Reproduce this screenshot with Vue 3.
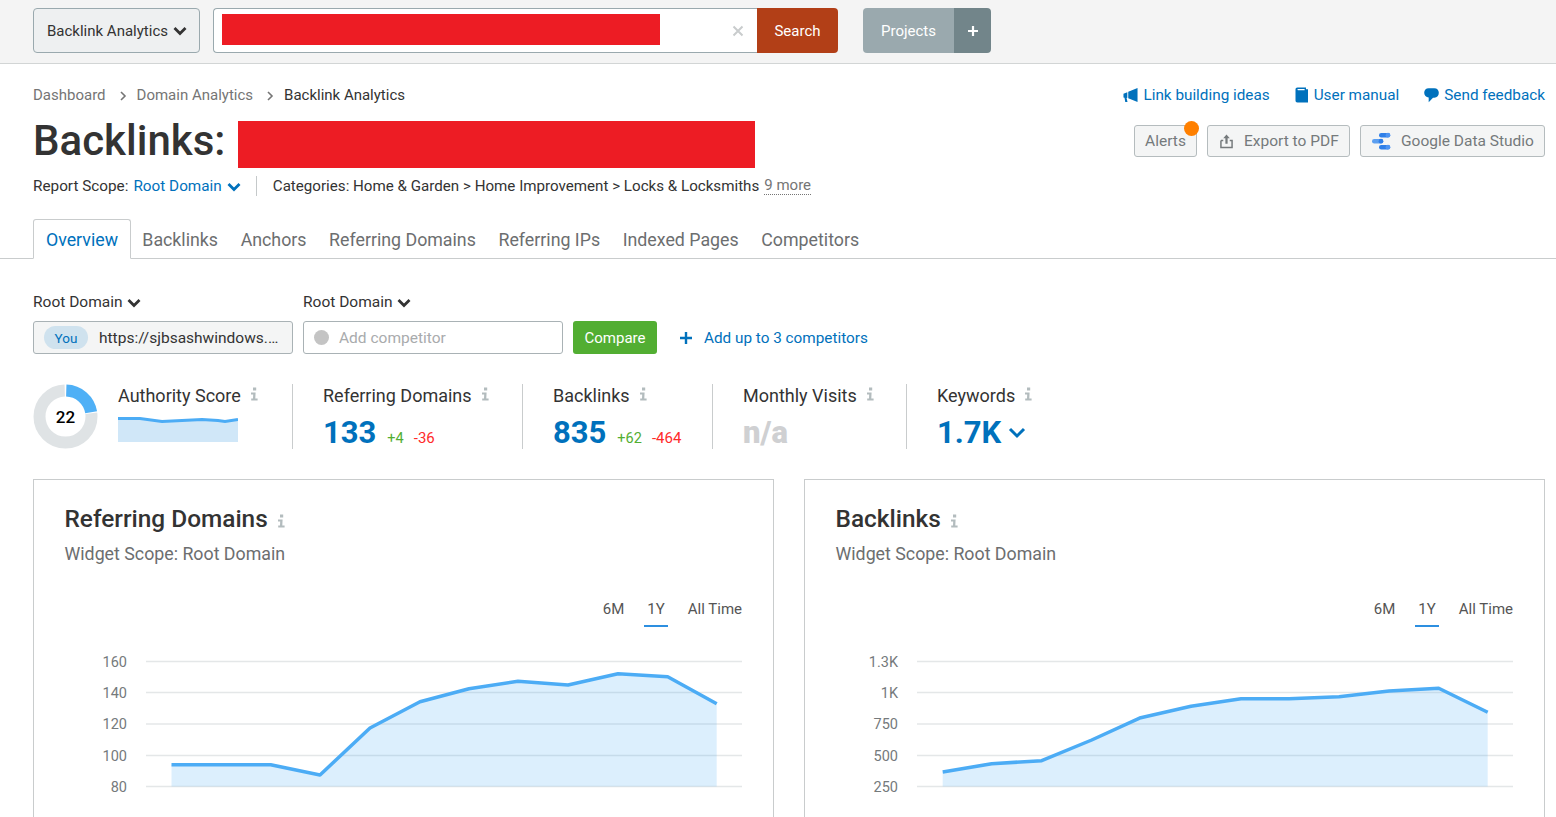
<script setup>
const tabs = ['Overview', 'Backlinks', 'Anchors', 'Referring Domains', 'Referring IPs', 'Indexed Pages', 'Competitors']
const gridY = [21.5, 52.5, 84, 115.5, 146.5]

function makeChart(title, offset, labels, pts) {
  const local = pts.map(([x, y]) => [x - offset, y - 640])
  const line = local.map(p => p.join(',')).join(' ')
  const area = `${local[0][0]},146.5 ${line} ${local[local.length - 1][0]},146.5`
  return { title, labels, line, area }
}

const charts = [
  makeChart('Referring Domains', 34, ['160', '140', '120', '100', '80'], [
    [171.5, 764.7], [221, 764.7], [270.7, 764.7], [320, 775], [370, 728], [420, 701.7],
    [469, 688.7], [518, 681.3], [568, 685], [618, 673.7], [667.7, 676.7], [716.7, 703.7]
  ]),
  makeChart('Backlinks', 805, ['1.3K', '1K', '750', '500', '250'], [
    [942.7, 772], [991.7, 763.7], [1041.7, 760.7], [1091.7, 740], [1140.7, 717.7], [1191, 706.3],
    [1241, 698.7], [1289, 698.7], [1339, 696.7], [1389, 691], [1438.7, 688.3], [1487.7, 712.3]
  ])
]
</script>

<template>
  <div class="page">
    <header class="topbar">
      <button class="tool-select">
        <span>Backlink Analytics</span>
        <svg class="chev" viewBox="0 0 14 10"><path d="M1.5 2 L7 7.5 L12.5 2" /></svg>
      </button>
      <div class="search">
        <div class="search-box">
          <div class="redact-search"></div>
          <svg class="clear" viewBox="0 0 12 12"><path d="M1.5 1.5 L10.5 10.5 M10.5 1.5 L1.5 10.5" /></svg>
        </div>
        <button class="search-btn">Search</button>
      </div>
      <div class="projects">
        <span class="projects-label">Projects</span>
        <span class="projects-plus">
          <svg viewBox="0 0 12 12"><path d="M6 1 V11 M1 6 H11" /></svg>
        </span>
      </div>
    </header>

    <section class="head">
      <div class="crumbs-row">
        <nav class="crumbs">
          <span class="crumb">Dashboard</span>
          <svg class="crumb-sep" viewBox="0 0 8 10"><path d="M2 1 L6 5 L2 9" /></svg>
          <span class="crumb">Domain Analytics</span>
          <svg class="crumb-sep" viewBox="0 0 8 10"><path d="M2 1 L6 5 L2 9" /></svg>
          <span class="crumb current">Backlink Analytics</span>
        </nav>
        <div class="links">
          <a class="link">
            <svg class="link-icon" viewBox="0 0 16 16"><path d="M5.6 4.6 L15.5 0.5 V15.5 L5.6 11.4 Z M0.5 6.6 L4.6 5 V11 L3.8 11.2 L4.8 15.5 H2.4 L1.6 11 L0.5 10.6 Z" /></svg>
            Link building ideas
          </a>
          <a class="link">
            <svg class="link-icon book" viewBox="0 0 14 16"><path d="M2.5 0.5 H11 V2.2 H13 V15.5 H2.5 C1.2 15.5 0.5 14.7 0.5 13.5 V2.5 C0.5 1.3 1.2 0.5 2.5 0.5 Z M3 2 C2.3 2 2.3 3.2 3 3.2 H9.6 V2 Z" fill-rule="evenodd" /></svg>
            User manual
          </a>
          <a class="link">
            <svg class="link-icon" viewBox="0 0 16 16"><path d="M5 0.8 H11 C14 0.8 15.8 2.8 15.8 5.6 C15.8 8.5 14 10.8 11 10.8 H9.6 L5 15.6 V10.6 C2.2 10.2 0.2 8.4 0.2 5.6 C0.2 2.8 2 0.8 5 0.8 Z" /></svg>
            Send feedback
          </a>
        </div>
      </div>

      <div class="title-row">
        <div class="title-wrap">
          <h1 class="title">Backlinks:</h1>
          <div class="redact-title"></div>
        </div>
        <div class="actions">
          <button class="action alerts">
            Alerts
            <span class="dot"></span>
          </button>
          <button class="action export">
            <svg class="export-icon" viewBox="0 0 14 16"><path class="solid" d="M7 0.5 L10.5 4.5 H8.2 V10.5 H5.8 V4.5 H3.5 Z" /><path class="outline" d="M1 7 V14.5 H13 V7 H10.5 M3.5 7 H1" /></svg>
            Export to PDF
          </button>
          <button class="action gds">
            <svg class="gds-icon" viewBox="0 0 20 18">
              <rect x="8" y="1" width="11" height="4.5" rx="2.25" fill="#2f7fe8" />
              <circle cx="17" cy="3.2" r="2.4" fill="#4d94f2" />
              <rect x="1" y="7" width="11" height="4.5" rx="2.25" fill="#5c9ff0" />
              <circle cx="10" cy="9.2" r="2.4" fill="#2f7fe8" />
              <rect x="8" y="13" width="11" height="4.5" rx="2.25" fill="#2f7fe8" />
              <circle cx="17" cy="15.2" r="2.4" fill="#4d94f2" />
            </svg>
            Google Data Studio
          </button>
        </div>
      </div>

      <div class="scope-row">
        <span>Report Scope:</span>
        <span class="scope-link">Root Domain</span>
        <svg class="chev blue" viewBox="0 0 14 10"><path d="M1.5 2 L7 7.5 L12.5 2" /></svg>
        <span class="scope-sep"></span>
        <span class="cats">Categories: Home &amp; Garden &gt; Home Improvement &gt; Locks &amp; Locksmiths</span>
        <span class="more">9 more</span>
      </div>
    </section>

    <nav class="tabs">
      <span v-for="(t, i) in tabs" :key="t" class="tab" :class="{ active: i === 0 }">{{ t }}</span>
    </nav>

    <section class="filters">
      <div class="filter-col">
        <div class="filter-label">
          Root Domain
          <svg class="chev" viewBox="0 0 14 10"><path d="M1.5 2 L7 7.5 L12.5 2" /></svg>
        </div>
        <div class="field you-field">
          <span class="you">You</span>
          <span class="url">https://sjbsashwindows.…</span>
        </div>
      </div>
      <div class="filter-col">
        <div class="filter-label">
          Root Domain
          <svg class="chev" viewBox="0 0 14 10"><path d="M1.5 2 L7 7.5 L12.5 2" /></svg>
        </div>
        <div class="field add-field">
          <span class="grey-dot"></span>
          <span class="placeholder">Add competitor</span>
        </div>
      </div>
      <button class="compare">Compare</button>
      <a class="add-more">
        <svg class="add-plus" viewBox="0 0 14 14"><path d="M7 1 V13 M1 7 H13" /></svg>
        Add up to 3 competitors
      </a>
    </section>

    <section class="stats">
      <div class="stat authority">
        <svg class="donut" viewBox="0 0 65 65">
          <circle class="ring-grey" cx="32.5" cy="32.5" r="26" pathLength="100" stroke-dasharray="76.6 23.4" stroke-dashoffset="-22.9" />
          <circle class="ring-blue" cx="32.5" cy="32.5" r="26" pathLength="100" stroke-dasharray="21.8 78.2" stroke-dashoffset="-0.5" />
          <text x="32.5" y="38.5" text-anchor="middle" class="donut-text">22</text>
        </svg>
        <div class="authority-body">
          <div class="stat-label">Authority Score <svg class="info" viewBox="0 0 8 14"><path d="M3 0.5 H6.2 V3.4 H3 Z M1 5.4 H5.6 L5.3 11.4 H7.6 V13.5 H1.2 V11.4 H3 L3.2 7.4 H1 Z" /></svg></div>
          <svg class="spark" viewBox="0 0 120 25">
            <polygon class="spark-area" points="0,1.5 22,1.5 44,4.5 64,3.5 84,2.5 100,3.5 107,4.5 120,2.5 120,25 0,25" />
            <polyline class="spark-line" points="0,1.5 22,1.5 44,4.5 64,3.5 84,2.5 100,3.5 107,4.5 120,2.5" />
          </svg>
        </div>
      </div>
      <div class="stat domains">
        <div class="stat-label">Referring Domains <svg class="info" viewBox="0 0 8 14"><path d="M3 0.5 H6.2 V3.4 H3 Z M1 5.4 H5.6 L5.3 11.4 H7.6 V13.5 H1.2 V11.4 H3 L3.2 7.4 H1 Z" /></svg></div>
        <div class="stat-value"><span class="num">133</span><span class="up">+4</span><span class="down">-36</span></div>
      </div>
      <div class="stat links-stat">
        <div class="stat-label">Backlinks <svg class="info" viewBox="0 0 8 14"><path d="M3 0.5 H6.2 V3.4 H3 Z M1 5.4 H5.6 L5.3 11.4 H7.6 V13.5 H1.2 V11.4 H3 L3.2 7.4 H1 Z" /></svg></div>
        <div class="stat-value"><span class="num">835</span><span class="up">+62</span><span class="down">-464</span></div>
      </div>
      <div class="stat visits">
        <div class="stat-label">Monthly Visits <svg class="info" viewBox="0 0 8 14"><path d="M3 0.5 H6.2 V3.4 H3 Z M1 5.4 H5.6 L5.3 11.4 H7.6 V13.5 H1.2 V11.4 H3 L3.2 7.4 H1 Z" /></svg></div>
        <div class="stat-value"><span class="num na">n/a</span></div>
      </div>
      <div class="stat keywords">
        <div class="stat-label">Keywords <svg class="info" viewBox="0 0 8 14"><path d="M3 0.5 H6.2 V3.4 H3 Z M1 5.4 H5.6 L5.3 11.4 H7.6 V13.5 H1.2 V11.4 H3 L3.2 7.4 H1 Z" /></svg></div>
        <div class="stat-value">
          <span class="num">1.7K</span>
          <svg class="kw-chev" viewBox="0 0 18 12"><path d="M2 2 L9 9 L16 2" /></svg>
        </div>
      </div>
    </section>

    <section class="cards">
      <article v-for="c in charts" :key="c.title" class="card">
        <h2 class="card-title">{{ c.title }} <svg class="info" viewBox="0 0 8 14"><path d="M3 0.5 H6.2 V3.4 H3 Z M1 5.4 H5.6 L5.3 11.4 H7.6 V13.5 H1.2 V11.4 H3 L3.2 7.4 H1 Z" /></svg></h2>
        <div class="card-sub">Widget Scope: Root Domain</div>
        <div class="ranges">
          <span class="range">6M</span>
          <span class="range active">1Y</span>
          <span class="range">All Time</span>
        </div>
        <svg class="chart" viewBox="0 0 739 177">
          <line v-for="y in gridY" :key="y" class="grid" x1="112" x2="708" :y1="y" :y2="y" />
          <text v-for="(l, i) in c.labels" :key="l" class="axis" x="93" :y="gridY[i] + 5">{{ l }}</text>
          <polygon class="area" :points="c.area" />
          <polyline class="line" :points="c.line" />
        </svg>
      </article>
    </section>
  </div>
</template>

<style>
html, body { margin: 0; background: #fff; overflow: hidden; }
</style>

<style scoped>
.page {
  width: 1556px;
  height: 817px;
  overflow: hidden;
  background: #fff;
  font-family: Roboto, "Noto Sans", sans-serif;
  font-size: 15px;
  color: #333;
}
button { font-family: inherit; cursor: pointer; }
svg { display: block; flex: none; }

.chev { width: 14px; height: 10px; }
.chev path { fill: none; stroke: #333; stroke-width: 2.8; }
.chev.blue path { stroke: #0071bc; }

.topbar {
  height: 64px;
  box-sizing: border-box;
  border-bottom: 1px solid #d2d5d5;
  background: #f4f4f4;
  padding: 8px 0 0 33px;
  display: flex;
  align-items: flex-start;
}
.tool-select {
  width: 167px;
  height: 45px;
  background: #eef0f1;
  border: 1px solid #9aa9ae;
  border-radius: 4px;
  color: #333;
  font-size: 15px;
  padding: 0 0 0 13px;
  display: flex;
  align-items: center;
  gap: 5px;
}
.search { margin-left: 13px; display: flex; height: 45px; }
.search-box {
  width: 544px;
  box-sizing: border-box;
  background: #fff;
  border: 1px solid #9aa9ae;
  border-right: none;
  border-radius: 4px 0 0 4px;
  padding-left: 8px;
  display: flex;
  align-items: center;
  justify-content: space-between;
}
.redact-search { width: 438px; height: 31px; background: #ed1c24; margin-bottom: 2px; }
.clear { width: 12px; height: 12px; margin-right: 13px; margin-top: 1px; }
.clear path { stroke: #c9cccd; stroke-width: 2; fill: none; }
.search-btn {
  width: 81px;
  border: none;
  background: #b23f17;
  color: #fff;
  font-size: 15px;
  border-radius: 0 4px 4px 0;
  padding: 0;
}
.projects { margin-left: 25px; height: 45px; display: flex; border-radius: 4px; overflow: hidden; color: #fff; }
.projects-label { width: 91px; background: #9aa9ae; display: flex; align-items: center; justify-content: center; }
.projects-plus { width: 37px; background: #72858a; display: flex; align-items: center; justify-content: center; }
.projects-plus svg { width: 12px; height: 12px; }
.projects-plus path { stroke: #fff; stroke-width: 2.2; fill: none; }

.head { padding: 0 11px 0 33px; }
.crumbs-row { height: 20px; margin-top: 21px; display: flex; justify-content: space-between; align-items: center; }
.crumbs { display: flex; align-items: center; }
.crumb { color: #757575; }
.crumb.current { color: #333; }
.crumb-sep { width: 8px; height: 10px; margin: 1px 10px 0 13px; }
.crumb-sep path { fill: none; stroke: #757575; stroke-width: 1.6; }
.links { display: flex; gap: 25px; font-size: 15.3px; }
.link { color: #0071bc; display: flex; align-items: center; gap: 5px; }
.link-icon { width: 15px; height: 16px; fill: #0071bc; }
.link-icon.book { width: 14px; }

.title-row { margin-top: 16px; height: 47px; display: flex; justify-content: space-between; align-items: flex-start; }
.title-wrap { display: flex; height: 47px; }
.title { margin: 0; font-size: 42px; font-weight: 500; color: #333; line-height: 39px; width: 205px; }
.redact-title { width: 517px; height: 47px; background: #ed1c24; }
.actions { display: flex; gap: 10px; margin-top: 4px; }
.action {
  height: 32px;
  background: #f4f5f5;
  border: 1px solid #b5bcbe;
  border-radius: 3px;
  color: #757a7c;
  font-size: 15.5px;
  display: flex;
  align-items: center;
  position: relative;
  padding: 0;
}
.alerts { width: 63px; justify-content: center; padding-right: 0; }
.dot { position: absolute; top: -5px; right: -3px; width: 15px; height: 15px; border-radius: 50%; background: #ff8000; }
.export { width: 143px; padding-left: 12px; gap: 11px; }
.export-icon { width: 13px; height: 15px; }
.export-icon .solid { fill: #757a7c; }
.export-icon .outline { fill: none; stroke: #757a7c; stroke-width: 1.6; }
.gds { width: 185px; padding-left: 10px; gap: 10px; }
.gds-icon { width: 20px; height: 18px; }

.scope-row { margin-top: 8px; height: 20px; display: flex; align-items: center; font-size: 15.3px; }
.scope-link { color: #0071bc; margin-left: 5px; }
.scope-row .chev { margin-left: 5px; margin-top: 2px; }
.scope-sep { width: 1px; height: 20px; background: #c5c9ca; margin: 0 15.5px; }
.cats { font-size: 15.15px; }
.more { margin-left: 5px; color: #757575; border-bottom: 1px dotted #757575; line-height: 17px; font-size: 15px; }

.tabs {
  margin-top: 23px;
  height: 39px;
  padding-left: 33px;
  border-bottom: 1px solid #c9cccd;
  display: flex;
  font-size: 17.8px;
  color: #6c6e6f;
}
.tab { height: 40px; display: flex; align-items: center; padding: 1px 11.3px 0; box-sizing: border-box; }
.tab.active {
  color: #0071bc;
  background: #fff;
  border: 1px solid #c9cccd;
  border-bottom-color: #fff;
  border-radius: 3px 3px 0 0;
  width: 98px;
  justify-content: center;
  padding: 0;
}

.filters { margin-top: 33px; padding-left: 33px; display: flex; align-items: flex-end; gap: 10px; }
.filter-col { width: 260px; }
.filter-label { height: 20px; display: flex; align-items: center; gap: 4px; margin-bottom: 9px; font-size: 15.5px; }
.filter-label .chev { margin-top: 2px; }
.field {
  height: 33px;
  box-sizing: border-box;
  border: 1px solid #a9b2b5;
  border-radius: 3px;
  display: flex;
  align-items: center;
}
.you-field { background: #f4f5f5; padding-left: 10px; }
.you { width: 44px; height: 23px; border-radius: 12px; background: #cfe2ee; color: #0071bc; font-size: 13.5px; display: flex; align-items: center; justify-content: center; }
.url { margin-left: 11px; font-size: 15.5px; }
.add-field { padding-left: 10px; background: #fff; }
.grey-dot { width: 15px; height: 15px; border-radius: 50%; background: #c4c4c4; }
.placeholder { margin-left: 10px; color: #a9abad; font-size: 15.5px; }
.compare { width: 84px; height: 33px; border: none; border-radius: 3px; background: #52ae32; color: #fff; font-size: 15px; padding: 0; }
.add-more { margin-left: 12px; height: 33px; display: flex; align-items: center; color: #0071bc; gap: 11px; font-size: 15.3px; }
.add-plus { width: 14px; height: 14px; }
.add-plus path { stroke: #0071bc; stroke-width: 2.4; fill: none; }

.stats { margin-top: 30px; padding-left: 33px; height: 65px; display: flex; }
.stat { box-sizing: border-box; height: 65px; border-left: 1px solid #c9cccd; padding-left: 30px; }
.authority { width: 259px; border-left: none; padding-left: 0; display: flex; }
.domains { width: 230px; }
.links-stat { width: 190px; }
.visits { width: 194px; }
.keywords { width: 200px; }
.donut { width: 65px; height: 65px; }
.donut circle { fill: none; stroke-width: 12; transform: rotate(-90deg); transform-origin: 32.5px 32.5px; }
.ring-grey { stroke: #dfe3e5; }
.ring-blue { stroke: #4fb0f6; }
.donut-text { font-size: 17px; font-weight: 500; fill: #000; }
.authority-body { margin-left: 20px; width: 120px; }
.stat-label { height: 24px; margin-top: -1px; font-size: 18px; display: flex; align-items: center; gap: 9px; white-space: nowrap; }
.info { width: 8px; height: 14px; fill: #b3bcbe; margin-bottom: 2px; }
.spark { width: 120px; height: 25px; margin-top: 10px; }
.spark-area { fill: #d0e7f8; }
.spark-line { fill: none; stroke: #4cacf5; stroke-width: 3; }
.stat-value { display: flex; align-items: baseline; margin-top: 8px; height: 36px; line-height: 36px; }
.num { font-size: 31px; font-weight: 700; color: #0071bc; }
.num.na { color: #cfd0d2; font-weight: 900; }
.up { color: #52ae32; font-size: 14.5px; margin-left: 11px; }
.down { color: #ff2a2a; font-size: 15px; margin-left: 10px; }
.kw-chev { width: 18px; height: 12px; margin-left: 7px; align-self: center; }
.kw-chev path { fill: none; stroke: #0071bc; stroke-width: 3; }

.cards { margin-top: 30px; padding-left: 33px; display: flex; gap: 30px; }
.card {
  width: 741px;
  box-sizing: border-box;
  border: 1px solid #c9cccd;
  padding: 23px 31px 0 30.5px;
  height: 400px;
}
.card-title { margin: 0; height: 32px; line-height: 32px; font-size: 24.4px; font-weight: 500; color: #333; display: flex; align-items: center; gap: 9px; }
.card-title .info { width: 8px; height: 14px; margin-bottom: 0; margin-top: 3px; }
.card-sub { margin-top: 7px; height: 24px; line-height: 24px; font-size: 17.8px; color: #6c6e6f; }
.ranges { margin-top: 32px; height: 29px; display: flex; justify-content: flex-end; gap: 20px; }
.range { height: 29px; box-sizing: border-box; line-height: 22px; color: #555; }
.range.active { color: #555; border-bottom: 2px solid #2d8fe0; padding: 0 3px; }
.chart { width: 739px; height: 177px; margin: 13px -31px 0 -30.5px; }
.grid { stroke: #e4e7e8; stroke-width: 1.5; }
.axis { font-size: 14.5px; fill: #757a7c; text-anchor: end; }
.area { fill: #4fb0f6; fill-opacity: 0.2; }
.line { fill: none; stroke: #4cacf5; stroke-width: 3.5; stroke-linejoin: round; }
</style>
